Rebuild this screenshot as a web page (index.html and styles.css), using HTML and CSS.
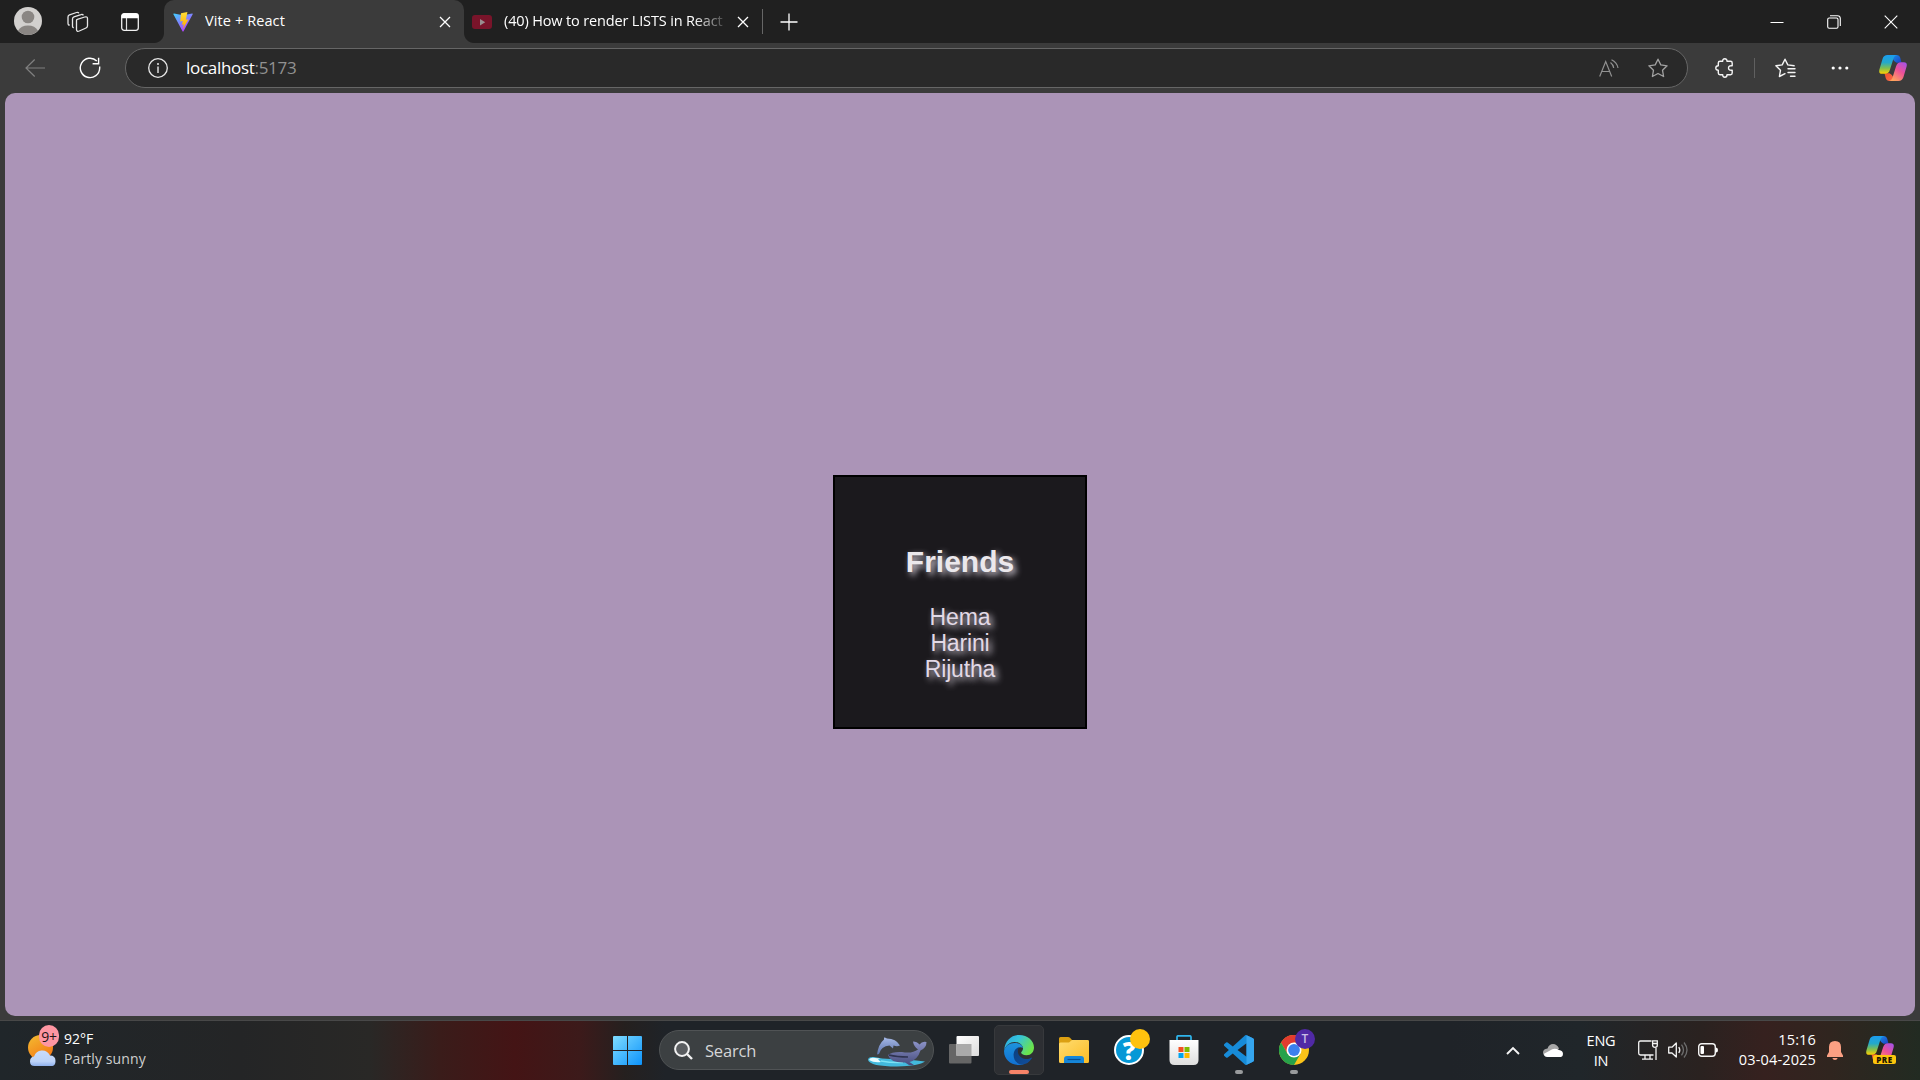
FILE: index.html
```html
<!DOCTYPE html>
<html lang="en">
<head>
<meta charset="utf-8">
<title>Vite + React</title>
<link rel="stylesheet" href="styles.css">
</head>
<body>
<svg class="defs" width="0" height="0" aria-hidden="true">
  <defs>
    <linearGradient id="cp-left" x1="0" y1="0" x2="0" y2="1"><stop offset="0" stop-color="#1b9df0"/><stop offset=".4" stop-color="#24a9c9"/><stop offset=".7" stop-color="#7fbf4f"/><stop offset="1" stop-color="#ffd000"/></linearGradient>
    <linearGradient id="cp-top" x1="0" y1="0" x2="1" y2="1"><stop offset="0" stop-color="#1a8fe8"/><stop offset="1" stop-color="#1c3fc4"/></linearGradient>
    <linearGradient id="cp-right" x1="1" y1="0" x2=".3" y2="1"><stop offset="0" stop-color="#9b52f0"/><stop offset=".5" stop-color="#ee5097"/><stop offset="1" stop-color="#ffa45c"/></linearGradient>
    <linearGradient id="cp-bottom" x1="0" y1="0" x2="1" y2="1"><stop offset="0" stop-color="#f0502c"/><stop offset="1" stop-color="#f96b4a"/></linearGradient>
    <linearGradient id="vite-a" x1="0" y1="0" x2=".7" y2="1"><stop offset="0" stop-color="#41d1ff"/><stop offset="1" stop-color="#bd34fe"/></linearGradient>
    <linearGradient id="vite-b" x1="0" y1="0" x2="0" y2="1"><stop offset="0" stop-color="#ffdd35"/><stop offset="1" stop-color="#ffa800"/></linearGradient>
    <linearGradient id="win" x1="0" y1="0" x2="1" y2="1"><stop offset="0" stop-color="#7fdcff"/><stop offset="1" stop-color="#0d93fb"/></linearGradient>
    <linearGradient id="edge-top" x1="0" y1="0" x2="1" y2=".5"><stop offset="0" stop-color="#2aa5e0"/><stop offset=".45" stop-color="#35c3dc"/><stop offset="1" stop-color="#6be34b"/></linearGradient>
    <linearGradient id="edge-mid" x1="0" y1="0" x2="0" y2="1"><stop offset="0" stop-color="#1d93dc"/><stop offset="1" stop-color="#1170d2"/></linearGradient>
    <linearGradient id="edge-dark" x1="0" y1="0" x2="1" y2="1"><stop offset="0" stop-color="#0c3f7c"/><stop offset="1" stop-color="#114f9f"/></linearGradient>
    <linearGradient id="folder" x1="0" y1="0" x2="1" y2="1"><stop offset="0" stop-color="#ffdc70"/><stop offset="1" stop-color="#fcbc25"/></linearGradient>
    <linearGradient id="sun" x1="0" y1="0" x2=".6" y2="1"><stop offset="0" stop-color="#f3bd32"/><stop offset="1" stop-color="#f47a16"/></linearGradient>
    <linearGradient id="cloud" x1="0" y1="0" x2="0" y2="1"><stop offset="0" stop-color="#c9dbfa"/><stop offset=".7" stop-color="#bcd3f8"/><stop offset="1" stop-color="#8fb0ec"/></linearGradient>
    <linearGradient id="whale" x1="0" y1="0" x2="0" y2="1"><stop offset="0" stop-color="#8c93c8"/><stop offset="1" stop-color="#464b7c"/></linearGradient>
    <linearGradient id="dolphin" x1="0" y1="0" x2="0" y2="1"><stop offset="0" stop-color="#a5b8e6"/><stop offset="1" stop-color="#5c73ad"/></linearGradient>
    <linearGradient id="bag" x1="0" y1="0" x2="0" y2="1"><stop offset="0" stop-color="#fff"/><stop offset="1" stop-color="#dedede"/></linearGradient>
    <linearGradient id="pane" x1="0" y1="0" x2="1" y2="1"><stop offset="0" stop-color="#fff"/><stop offset="1" stop-color="#dcdcdc"/></linearGradient>
  </defs>
  <symbol id="copilot" viewBox="0 0 28 26">
    <path d="M13 0h4.500q3 0 3.800 3l1.200 4.800h-5q-2.500-1-4.500-5z" fill="url(#cp-top)"/>
    <path d="M15 26h-4.500q-3 0-3.800-3L5.500 18.200h5q2.500 1 4.500 5z" fill="url(#cp-bottom)"/>
    <path d="M8.500 0H18q-3 .5-4 5L11 14.500Q9.800 18.800 6 18.800H3Q-.6 18.800.4 14.500L3.600 3.700Q4.800 0 8.500 0z" fill="url(#cp-left)"/>
    <path d="M19.500 26H10q3-.5 4-5l3-9.500q1.200-4.300 5-4.300h3q3.600 0 2.600 4.300l-3.200 10.800q-1.200 3.700-4.900 3.700z" fill="url(#cp-right)"/>
  </symbol>
  <symbol id="close" viewBox="0 0 12 12"><path d="M1 1l10 10M11 1L1 11" fill="none" stroke="#fff" stroke-width="1.300"/></symbol>
</svg>

<header class="tabstrip">
  <svg class="profile" viewBox="0 0 28 28"><circle cx="14" cy="14" r="14" fill="#d2d0ce"/><circle cx="14" cy="10" r="6.300" fill="#8a8683"/><path d="M4 23.800Q7 18.600 14 18.600T24 23.800A14 14 0 0 1 4 23.800z" fill="#8a8683"/></svg>
  <svg class="workspaces" viewBox="0 0 22 22" fill="none" stroke="#e6e6e6" stroke-width="1.300" stroke-linejoin="round">
    <path d="M10.300 8.300L17.700 6q2.800-.8 2.800 1.600v7.200q0 1.500-1.500 2.200l-6.700 3q-2.800 1-2.800-1.500V9.500q0-1 .8-1.200z"/>
    <path d="M6.800 16.500q-1.300.3-1.300-1.500V8q0-1.600 1.500-2.200l7-2.200q1.700-.6 2.400.8"/>
    <path d="M2.700 14q-1.700.2-1.700-1.700V6q0-1.600 1.500-2.200l7-2.300q1.700-.6 2.400.8"/>
  </svg>
  <svg class="vertical-tabs" viewBox="0 0 18 18"><rect x=".7" y=".7" width="16.600" height="16.600" rx="2.500" fill="none" stroke="#f0f0f0" stroke-width="1.300"/><path d="M.5 5.200V3Q.5.500 3 .5h12q2.500 0 2.500 2.500v2.200z" fill="#fff"/><path d="M5.500 5v12" stroke="#e0e0e0" stroke-width="1.200"/></svg>
  <div class="tab tab-active">
    <svg class="favicon" viewBox="0 0 20 20"><path d="M.4 2.300L9.500 19.300q.5.900 1 0L19.700 2.300q.4-.8-.5-.7L10 3.200 1 1.600q-1-.1-.6.700z" fill="url(#vite-a)"/><path d="M14.400.1L8 1.200l-.8 8.300 2.600-.5-.9 3.800 1.900-.5-1 4.600 5.700-9.700-2.600.5z" fill="url(#vite-b)"/></svg>
    <span class="tab-title">Vite + React</span>
    <svg class="tab-close"><use href="#close"/></svg>
  </div>
  <div class="tab tab-idle">
    <svg class="favicon" viewBox="0 0 20 20"><rect y="3" width="20" height="14" rx="3" fill="#79142a"/><path d="M8 7v6.500l5.200-3.200z" fill="#9a8e90"/></svg>
    <span class="tab-title tab-title-fade">(40) How to render LISTS in React</span>
    <svg class="tab-close"><use href="#close"/></svg>
  </div>
  <span class="tab-divider"></span>
  <svg class="new-tab" viewBox="0 0 18 18"><path d="M9 .5v17M.5 9h17" stroke="#fff" stroke-width="1.300"/></svg>
  <div class="window-controls">
    <svg viewBox="0 0 14 14"><path d="M.5 7.500h13" stroke="#fff"/></svg>
    <svg viewBox="0 0 14 14" fill="none" stroke="#fff" stroke-width="1.100"><rect x=".7" y="3" width="10.300" height="10.300" rx="1.500"/><path d="M3 .7h7.500Q13.300.7 13.300 3.500V11"/></svg>
    <svg viewBox="0 0 14 14"><path d="M.7.700l12.600 12.600M13.300.7L.7 13.300" stroke="#fff" stroke-width="1.100"/></svg>
  </div>
</header>

<nav class="toolbar">
  <svg class="back" viewBox="0 0 20 18" fill="none" stroke="#808080" stroke-width="1.200"><path d="M20 9H1M9.700.5L1 9l8.700 8.500"/></svg>
  <svg class="reload" viewBox="0 0 22 22" fill="none" stroke="#fff" stroke-width="1.400"><path d="M17.800 4A9.700 9.700 0 1 0 20.700 11V9.500M19.600.8V6.800H13.600"/></svg>
  <div class="address">
    <svg class="info" viewBox="0 0 20 20"><circle cx="10" cy="10" r="9.300" fill="none" stroke="#e8e8e8" stroke-width="1.300"/><path d="M10 8.500V15" stroke="#e8e8e8" stroke-width="1.400"/><circle cx="10" cy="6" r="1" fill="#e8e8e8"/></svg>
    <span class="url">localhost<span class="port">:5173</span></span>
    <svg class="read-aloud" viewBox="0 0 20 18" fill="none" stroke="#919191" stroke-width="1.200"><path d="M.7 17.500L6.700 2.500l6 15M2.800 12.500h7.800M11.500 3.500q2.700 2 3.200 5.500M12.500.7q5.500 2.500 6.500 8.300"/></svg>
    <svg class="star" viewBox="0 0 20 20"><path d="M10 1.200l2.800 5.700 6.300.9-4.600 4.400 1.100 6.300L10 15.500l-5.600 3 1.100-6.300L.9 7.800l6.300-.9z" fill="none" stroke="#a2a2a2" stroke-width="1.300" stroke-linejoin="round"/></svg>
  </div>
  <svg class="extensions" viewBox="0 0 20 20"><path d="M3.300 5Q3.300 3.300 5 3.300H7.700Q7.500.800 9.800.800T12 3.300h3.500q1.700 0 1.700 1.700V7.800Q13.500 7.200 13.500 10t3.700 2.200V15q0 1.700-1.700 1.700H12Q12 19.200 9.800 19.200T7.700 16.700H5Q3.300 16.700 3.300 15V12.200Q.8 12.200.8 10T3.300 7.700z" fill="none" stroke="#f3f3f3" stroke-width="1.400" stroke-linejoin="round"/></svg>
  <span class="toolbar-divider"></span>
  <svg class="favorites" viewBox="0 0 21 20" fill="none" stroke="#f5f5f5" stroke-width="1.400" stroke-linejoin="round" stroke-linecap="round"><path d="M10 15.700l-5.600 2.800 1.100-6.300L.9 7.800l6.300-.9L10 1.200l2.800 5.700 6.300.9M13 10.700h7M13 14.500h7M15.500 18.300H20"/></svg>
  <svg class="more" viewBox="0 0 18 4" fill="#fff"><circle cx="2.200" cy="2" r="1.600"/><circle cx="9" cy="2" r="1.600"/><circle cx="15.800" cy="2" r="1.600"/></svg>
  <svg class="copilot"><use href="#copilot"/></svg>
</nav>

<main class="viewport">
  <div class="page">
    <section class="card">
      <h2 class="card-title">Friends</h2>
      <ul class="friends"><li>Hema</li><li>Harini</li><li>Rijutha</li></ul>
    </section>
  </div>
</main>

<footer class="taskbar">
  <div class="weather">
    <span class="weather-icon">
      <svg viewBox="0 0 28 32"><circle cx="12.500" cy="13.500" r="12.500" fill="url(#sun)"/><path d="M6.500 32Q2 32 2 27.500T6 22.500Q8 17 13.500 16.500T22 21.500Q27.500 21.500 27.500 27T23 32z" fill="url(#cloud)"/></svg>
      <span class="weather-badge">9+</span>
    </span>
    <div class="weather-text"><span>92°F</span><span class="weather-desc">Partly sunny</span></div>
  </div>

  <div class="apps">
    <span class="app"><svg width="29" height="29" viewBox="0 0 29 29"><path d="M0 1q0-1 1-1h13v14H0zM15 0h13q1 0 1 1v13H15zM0 15h14v14H1q-1 0-1-1zM15 15h14v13q0 1-1 1H15z" fill="url(#win)"/></svg></span>
    <div class="search">
      <svg class="search-icon" viewBox="0 0 19 19" fill="none" stroke="#f2f2f2" stroke-width="2"><circle cx="8" cy="8" r="6.900" fill="#5a5d60"/><path d="M13 13l5 5" stroke-width="2.400"/></svg>
      <span class="search-label">Search</span>
      <svg class="search-art" viewBox="0 0 60 30">
        <path d="M1 23Q1 19.500 7 20q10 2.500 20 2T58 24.500Q52 29 30 29.500 3 29.500 1 23z" fill="#43b9dc"/>
        <path d="M2 23q5 3 12 2l-3-2.500 2-1-5-.5q-5-1-6 2z" fill="#e8fbff"/>
        <path d="M14 24q10 2 22 1.500" stroke="#7de2f4" stroke-width="1.500" fill="none"/>
        <path d="M10 17.500Q11.500 7 17 2.500L17 .5Q18.500.5 20 1.500 29 1.500 33 8.500q-3 1.500-6.500 0L26 11.500l-3.500-3Q14 9 12 17z" fill="url(#dolphin)"/>
        <path d="M21 18Q25 14.500 35 15 45 17 51 12.500 46.500 9 46 4.500q4 0 6.500 3Q55 4 59.500 5q0 6-6 8.500-3 9.500-11 11.500l4.500 3q-5 1-9-2.500Q23 26 21 18z" fill="url(#whale)"/>
        <path d="M22 18q8 2 19 2" stroke="#2f3350" stroke-width="1.500" fill="none"/>
      </svg>
    </div>
    <span class="app"><svg width="30" height="30" viewBox="0 0 30 30"><rect y="9" width="22.500" height="19.500" rx="1" fill="#666"/><rect x="7.500" y="1" width="22.500" height="20" rx="1" fill="url(#pane)"/><path d="M7.500 9h15v12h-15z" fill="#aaa"/></svg></span>
    <span class="app app-current"><svg width="30" height="30" viewBox="0 0 30 30">
      <path d="M.2 15C1 6 7 0 15 0c9 0 15 6 15 12.500 0 4.500-3 7.700-7.500 7.700-4 0-5.700-1.900-5.300-3C18.500 16 19 14.500 19 13.500 19 10 15 7 10.500 7 6 7 2 10 .2 15z" fill="url(#edge-top)"/>
      <path d="M.1 15.500C1.200 11 5.500 8 10.500 8 15 8 18.500 10 18.900 13 16 11 12.500 13 12 17c-.4 6 4 11 8 12-2 .8-3.500 1-5 1C6 30-.5 23.500.1 15.500z" fill="url(#edge-mid)"/>
      <path d="M9.600 19c.4-4 3-6.500 5.500-6.800-3 4.300-.6 9.800 4.900 11.500 3.500 1 5.500-.2 7-1q1.200-.4.700.9C25 28 21 30 17 29.500 12 28.500 9.200 24 9.600 19z" fill="url(#edge-dark)"/></svg><i class="indicator indicator-active"></i></span>
    <span class="app"><svg width="30" height="26" viewBox="0 0 30 26"><path d="M0 1.500Q0 0 1.500 0H9q1.200 0 2 .8L13 3h15.500Q30 3 30 4.500V10H0z" fill="#dca012"/><path d="M0 7Q0 5.500 1.500 5.500H10L13 3h15.500Q30 3 30 4.500V24.500q0 1.500-1.500 1.500h-27Q0 26 0 24.500z" fill="url(#folder)"/><path d="M5 26v-4q0-3 3-3h14q3 0 3 3v4z" fill="#1686d9"/><path d="M8.500 22.500h13" stroke="#0a4f92" stroke-width="1.200"/></svg></span>
    <span class="app"><span class="help-icon">?</span><i class="help-dot"></i></span>
    <span class="app"><svg width="30" height="30" viewBox="0 0 30 30"><path d="M8 6V2q0-1.200 1.200-1.200h11.600Q22 .800 22 2v4" fill="none" stroke="#2fb5ec" stroke-width="1.700"/><path d="M.5 5h29v20q0 5-5 5h-19q-5 0-5-5z" fill="url(#bag)"/><path d="M9.500 12h5v5h-5z" fill="#f25022"/><path d="M15.500 12h5v5h-5z" fill="#7fba00"/><path d="M9.500 18h5v5h-5z" fill="#00a4ef"/><path d="M15.500 18h5v5h-5z" fill="#ffb900"/></svg></span>
    <span class="app"><svg width="30" height="30" viewBox="0 0 24 24"><path fill="#178bd8" d="M23.150 2.587L18.210.210a1.494 1.494 0 0 0-1.705.290l-9.460 8.630-4.120-3.128a.999.999 0 0 0-1.276.057L.327 7.261A1 1 0 0 0 .326 8.740L3.899 12 .326 15.260a1 1 0 0 0 .001 1.479L1.650 17.940a.999.999 0 0 0 1.276.057l4.120-3.128 9.460 8.630a1.492 1.492 0 0 0 1.704.290l4.942-2.377A1.500 1.500 0 0 0 24 20.060V3.939a1.500 1.500 0 0 0-.850-1.352zm-5.146 14.861L10.826 12l7.178-5.448v10.896z"/><path fill="#35a5ee" d="M18 .15l5.150 2.430q.85.500.85 1.360v16.120q0 .9-.85 1.360L18 23.850z"/></svg><i class="indicator"></i></span>
    <span class="app"><svg width="30" height="30" viewBox="0 0 30 30"><circle cx="15" cy="15" r="15" fill="#fcc419"/><path d="M2 7.500A15 15 0 0 1 28 7.500H15L8.500 18.800z" fill="#e23b2e"/><path d="M2 7.500A15 15 0 0 0 15 30l6.500-11.200H8.500z" fill="#27a24a"/><circle cx="15" cy="15" r="7.500" fill="#fff"/><circle cx="15" cy="15" r="5.900" fill="#3b80ee"/></svg><span class="chrome-badge">T</span><i class="indicator"></i></span>
  </div>

  <div class="tray">
    <svg class="tray-chevron" viewBox="0 0 14 9"><path d="M1 8l6-6 6 6" fill="none" stroke="#f5f5f5" stroke-width="1.900"/></svg>
    <svg class="tray-cloud" viewBox="0 0 20 13"><path d="M4 12.500Q0 12 0 8.500T4.500 4.500Q6 0 10 0t6 4.500L8 12.500z" fill="#a6a6a6"/><path d="M4.500 13Q1 13 1 9.800L7 6.500Q11 3.500 16 6q4 .5 4 4t-3.500 3z" fill="#fff"/></svg>
    <div class="language"><span>ENG</span><span>IN</span></div>
    <svg class="tray-network" viewBox="0 0 20 20" fill="none" stroke="#f4f4f4" stroke-width="1.300"><path d="M13.500 1H2.500Q.7 1 .7 2.800v10.400Q.7 15 2.500 15h13M4 19.200h11M7 15v4M12 15v4M18 8v12M14.600.800h4.700v4.500q0 2-2.300 2t-2.400-2zM14.500 3.500h5"/></svg>
    <svg class="tray-sound" viewBox="0 0 20 18" fill="none" stroke="#f4f4f4" stroke-width="1.300"><path d="M.7 6.200H4L8.300 2v14L4 12H.7z" stroke-linejoin="round"/><path d="M10.800 6q2 3 0 6"/><path d="M13.500 3.700q4 5.300 0 10.600M16 1.500q6 7.500 0 15" stroke="#6d6d6d"/></svg>
    <svg class="tray-battery" viewBox="0 0 20 14"><rect x=".7" y=".7" width="16.600" height="12.600" rx="3" fill="none" stroke="#f4f4f4" stroke-width="1.400"/><rect x="2.500" y="3" width="3.500" height="8" rx="1" fill="#fff"/><path d="M18 4.500q2 0 2 2.500t-2 2.500z" fill="#fff"/></svg>
    <div class="clock"><span>15:16</span><span>03-04-2025</span></div>
    <svg class="tray-bell" viewBox="0 0 16 19" fill="#fba083"><path d="M8 0q6 0 6 6v5l2 3.500V16H0v-1.500L2 11V6q0-6 6-6zM5.300 17h5.400Q10 19 8 19t-2.700-2z"/></svg>
    <span class="tray-copilot"><svg><use href="#copilot"/></svg><span class="pre">PRE</span></span>
  </div>
</footer>
</body>
</html>
```

FILE: styles.css
```css
* { box-sizing: border-box; }
body {
  margin: 0;
  width: 1920px;
  height: 1080px;
  overflow: hidden;
  display: flex;
  flex-direction: column;
  background: #3b3b3b;
  color: #fff;
  font-family: "Open Sans", "Noto Sans", sans-serif;
}
svg { display: block; flex: none; }
.defs { position: absolute; }

/* Tab strip */
.tabstrip {
  height: 43px;
  flex: none;
  display: flex;
  align-items: center;
  padding-left: 14px;
  background: #202020;
}
.profile { width: 28px; height: 28px; margin-bottom: 1px; }
.workspaces { width: 22px; height: 22px; margin-left: 25px; }
.vertical-tabs { width: 18px; height: 18px; margin-left: 32px; }
.tab { height: 43px; display: flex; align-items: center; padding-left: 9px; }
.tab-active {
  position: relative;
  width: 300px;
  margin-left: 25px;
  background: #3b3b3b;
  border-radius: 10px 10px 0 0;
}
.tab-active::before, .tab-active::after {
  content: "";
  position: absolute;
  bottom: 0;
  width: 10px;
  height: 10px;
}
.tab-active::before { left: -10px; background: radial-gradient(circle at 0 0, transparent 9.500px, #3b3b3b 10.500px); }
.tab-active::after { right: -10px; background: radial-gradient(circle at 100% 0, transparent 9.500px, #3b3b3b 10.500px); }
.tab-idle { width: 298px; padding-left: 8px; }
.favicon { width: 20px; height: 20px; }
.tab-title {
  width: 221px;
  margin: 0 12px 2px;
  overflow: hidden;
  white-space: nowrap;
  font-size: 14.500px;
  letter-spacing: -0.150px;
}
.tab-active .tab-title { width: 222px; letter-spacing: 0.100px; }
.tab-title-fade {
  -webkit-mask-image: linear-gradient(90deg, #000 190px, transparent 226px);
  mask-image: linear-gradient(90deg, #000 190px, transparent 226px);
}
.tab-close { width: 12px; height: 12px; }
.tab-divider { width: 1px; height: 25px; background: #666; }
.new-tab { width: 18px; height: 18px; margin-left: 17px; }
.window-controls { display: flex; gap: 43px; margin: 0 22px 0 auto; }
.window-controls svg { width: 14px; height: 14px; }

/* Toolbar */
.toolbar { height: 50px; flex: none; display: flex; align-items: center; padding-left: 25px; }
.back { width: 20px; height: 18px; }
.reload { width: 22px; height: 22px; margin-left: 34px; }
.address {
  width: 1563px;
  height: 40px;
  margin-left: 24px;
  padding: 0 19px 0 22px;
  display: flex;
  align-items: center;
  background: #292929;
  border: 1px solid #666;
  border-radius: 20px;
}
.info { width: 20px; height: 20px; }
.url { margin: 0 auto 2px 18px; font-size: 17px; letter-spacing: -0.300px; }
.port { color: #919191; }
.read-aloud { width: 20px; height: 18px; }
.star { width: 20px; height: 20px; margin-left: 29px; }
.extensions { width: 20px; height: 20px; margin-left: 27px; }
.toolbar-divider { width: 1px; height: 20px; margin-left: 19px; background: #606060; }
.favorites { width: 21px; height: 20px; margin-left: 20px; }
.more { width: 18px; height: 4px; margin-left: 35px; }
.copilot { width: 28px; height: 26px; margin-left: 30px; }

/* Web page */
.viewport { flex: 1; padding: 0 5px 4px; display: flex; border-bottom: 1px solid #484848; }
.page { flex: 1; padding-top: 382px; background: #ab94b7; border-radius: 10px; }
.card {
  width: 254px;
  height: 254px;
  margin: 0 auto;
  padding-top: 68px;
  background: #1b191d;
  border: 2px solid #000;
  font-family: "Liberation Sans", Arial, sans-serif;
  text-align: center;
  text-shadow: 3px 3px 6px rgba(240, 232, 244, 0.900);
}
.card-title { margin: 0; font-size: 30px; line-height: 34px; color: #ebe8ec; }
.friends {
  margin: 25px 0 0;
  padding: 0;
  list-style: none;
  font-size: 23px;
  line-height: 26px;
  letter-spacing: -0.150px;
  color: #e2d9e6;
}

/* Taskbar */
.taskbar {
  height: 59px;
  flex: none;
  display: grid;
  grid-template-columns: 602px 1fr auto;
  align-items: center;
  background: linear-gradient(90deg, #20262a 0, #242526 240px, #292826 370px, #3a1c1a 440px, #441415 515px, #3c1a1a 580px, #25201f 625px, #1f2328 665px, #1f2328 1450px, #20262a 1580px, #2a2220 1700px, #36211f 1765px, #30251f 1830px, #222b22 1920px);
}
.weather { display: flex; gap: 8px; padding-left: 28px; margin-bottom: 3px; }
.weather-icon { position: relative; width: 28px; padding-top: 5px; }
.weather-icon svg { width: 28px; height: 32px; }
.weather-badge {
  position: absolute;
  left: 11px;
  top: -4px;
  width: 20px;
  height: 22px;
  border-radius: 10px;
  background: #fd96a2;
  color: #1e1416;
  font-size: 14px;
  line-height: 23px;
  text-align: center;
  letter-spacing: -0.300px;
}
.weather-text { display: flex; flex-direction: column; font-size: 14px; line-height: 20px; }
.weather-desc { color: #cfcfcf; letter-spacing: 0.100px; }

.apps { display: flex; align-items: center; gap: 5px; margin-bottom: 1px; }
.app { position: relative; width: 50px; height: 50px; display: grid; place-items: center; }
.app-current { border-radius: 5px; background: #2d2f33; border: 1px solid #37393c; }
.indicator {
  position: absolute;
  bottom: 1px;
  left: 21px;
  width: 8px;
  height: 4px;
  border-radius: 2px;
  background: #999b9d;
}
.indicator-active { left: 14px; bottom: 0; width: 20px; background: #f78368; }
.search {
  width: 275px;
  height: 40px;
  margin-left: 2px;
  padding: 0 6px 0 14px;
  display: flex;
  align-items: center;
  background: #3c4042;
  border: 1px solid #505355;
  border-radius: 20px;
}
.search-icon { width: 19px; height: 19px; }
.search-label { margin: 0 auto 0 12px; font-size: 16.500px; letter-spacing: -0.200px; color: #d5d6d7; }
.search-art { width: 60px; height: 30px; margin-top: 4px; }
.help-icon {
  width: 30px;
  height: 30px;
  border: 2px solid #fff;
  border-radius: 50%;
  background: #0698d6;
  font: 800 25px/27px "Open Sans", sans-serif;
  text-align: center;
}
.help-dot { position: absolute; left: 26px; top: 4px; width: 20px; height: 20px; border-radius: 50%; background: #ffc20e; }
.chrome-badge {
  position: absolute;
  left: 26px;
  top: 4px;
  width: 20px;
  height: 20px;
  border-radius: 50%;
  background: #5029a5;
  color: #c9bde6;
  font-size: 12px;
  font-weight: 600;
  line-height: 20px;
  text-align: center;
}

.tray { display: flex; align-items: center; padding-right: 24px; margin-bottom: 1px; }
.tray-chevron { width: 14px; height: 9px; }
.tray-cloud { width: 20px; height: 13px; margin-left: 23px; }
.language, .clock { display: flex; flex-direction: column; font-size: 14.500px; line-height: 20px; }
.language { width: 40px; margin: 1px 0 0 18px; text-align: center; letter-spacing: -0.200px; }
.tray-network { width: 20px; height: 20px; margin-left: 17px; }
.tray-sound { width: 20px; height: 18px; margin-left: 10px; }
.tray-battery { width: 20px; height: 14px; margin-left: 10px; }
.clock { width: 98px; text-align: right; letter-spacing: 0.150px; margin-bottom: 1px; }
.tray-bell { width: 16px; height: 19px; margin-left: 11px; }
.tray-copilot { position: relative; width: 30px; height: 28px; margin-left: 23px; }
.tray-copilot svg { width: 28px; height: 26px; }
.pre {
  position: absolute;
  left: 7px;
  top: 19px;
  width: 23px;
  height: 9px;
  border-radius: 2px;
  background: #fcc50c;
  color: #1c1600;
  font-size: 8px;
  font-weight: 800;
  line-height: 9px;
  text-align: center;
  letter-spacing: 0.500px;
}
```
